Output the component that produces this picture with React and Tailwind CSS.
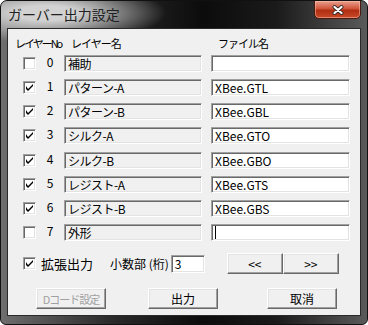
import React from "react"

const sunken =
  "border border-t-[#a0a0a0] border-l-[#a0a0a0] border-r-white border-b-white shadow-[inset_1px_1px_0_#696969,inset_-1px_-1px_0_#e3e3e3]"
const raised =
  "border border-t-white border-l-white border-r-[#696969] border-b-[#696969] shadow-[inset_-1px_-1px_0_#a0a0a0,inset_1px_1px_0_#e3e3e3] bg-[#f0f0f0]"

const layers = [
  { no: 0, name: "補助", file: "", on: false },
  { no: 1, name: "パターン-A", file: "XBee.GTL", on: true },
  { no: 2, name: "パターン-B", file: "XBee.GBL", on: true },
  { no: 3, name: "シルク-A", file: "XBee.GTO", on: true },
  { no: 4, name: "シルク-B", file: "XBee.GBO", on: true },
  { no: 5, name: "レジスト-A", file: "XBee.GTS", on: true },
  { no: 6, name: "レジスト-B", file: "XBee.GBS", on: true },
  { no: 7, name: "外形", file: "", on: false, caret: true },
]

function Check({ on }) {
  return (
    <div className={`w-[13px] h-[13px] bg-white ${sunken} flex items-center justify-center`}>
      {on && (
        <svg width="7" height="7" viewBox="0 0 7 7">
          <path d="M0 2v3l2 2 5-5V0L2 5z" fill="#000" />
        </svg>
      )}
    </div>
  )
}

function Btn({ children, w, disabled }) {
  return (
    <div
      className={`${raised} h-[21px] ${w} flex items-center justify-center whitespace-nowrap ${disabled ? "text-[#a0a0a0]" : "text-black"}`}
    >
      {children}
    </div>
  )
}

export default function App() {
  return (
    <div
      className="w-[368px] h-[325px] flex flex-col rounded-t-[7px] rounded-b-[6px] border border-[#111] overflow-hidden bg-[radial-gradient(ellipse_120px_30px_at_45px_12px,#d2d2d2_25%,rgba(200,200,200,0)_100%),linear-gradient(90deg,#6e6e6e_0%,#2a2a2a_30%,#0c0c0c_55%,#1a1a1a_75%,#5a5a5a_100%)] text-[12px] leading-[14px] text-black"
      style={{ fontFamily: '"Noto Sans CJK JP", "Noto Sans", sans-serif' }}
    >
      <div className="h-[27px] flex items-start relative">
        <div className="pl-[7px] pt-[5px] text-[14px] leading-[16px] text-[#222]">ガーバー出力設定</div>
        <div className="absolute right-[6px] top-[-1px] w-[47px] h-[19px] rounded-b-[5px] border border-[#4a1a10] bg-[linear-gradient(180deg,#e9a090_0%,#d0553a_45%,#b02e12_55%,#c84a2a_100%)] shadow-[inset_0_0_0_1px_rgba(255,200,180,0.5)] flex items-center justify-center">
          <svg width="12" height="10" viewBox="0 0 12 10">
            <path d="M2.5 2l7 6M9.5 2l-7 6" stroke="#3a2a2a" strokeWidth="4" strokeLinecap="round" />
            <path d="M2.5 2l7 6M9.5 2l-7 6" stroke="#fff" strokeWidth="2.2" strokeLinecap="round" />
          </svg>
        </div>
      </div>
      <div className="mx-[6px] h-[288px] border border-[#2a2a2a] bg-[#f0f0f0] relative">
        <div className="h-[26px] flex items-center pt-[1px] text-[11px] tracking-[-1px] whitespace-nowrap">
          <span className="ml-[7px] w-[56px] tracking-[-2px]">レイヤーNo</span>
          <span className="w-[147px]">レイヤー名</span>
          <span>ファイル名</span>
        </div>
        <div className="flex flex-col">
          {layers.map((l, i) => (
            <div key={l.no} className={`flex items-start ${i === 3 ? "h-[25px]" : "h-[24px]"}`}>
              <div className="ml-[15px] mt-[2px]">
                <Check on={l.on} />
              </div>
              <div className="w-[28px] text-center">{l.no}</div>
              <div className={`w-[138px] h-[17px] bg-[#f0f0f0] ${sunken} pl-[3px] flex items-center tracking-[-0.5px]`}>{l.name}</div>
              <div className={`ml-[9px] w-[139px] h-[17px] bg-white ${sunken} pl-[3px] flex items-center`}>
                {l.file}
                {l.caret && <div className="w-[1px] h-[13px] bg-black" />}
              </div>
            </div>
          ))}
        </div>
        <div className="flex items-center mt-[5px] h-[21px]">
          <div className="ml-[15px]">
            <Check on />
          </div>
          <span className="ml-[5px] text-[13px]">拡張出力</span>
          <span className="ml-[17px]">小数部 (桁)</span>
          <div className={`ml-[2px] w-[34px] h-[18px] bg-white ${sunken} pl-[3px] flex items-center`}>3</div>
          <div className="ml-[22px] flex">
            <Btn w="w-[56px]">&lt;&lt;</Btn>
            <Btn w="w-[56px]">&gt;&gt;</Btn>
          </div>
        </div>
        <div className="flex mt-[14px]">
          <div className="ml-[28px]">
            <Btn w="w-[70px]" disabled>
              <span className="text-[11px] tracking-[-1px]">Dコード設定</span>
            </Btn>
          </div>
          <div className="ml-[42px]">
            <Btn w="w-[70px]">出力</Btn>
          </div>
          <div className="ml-[49px]">
            <Btn w="w-[70px]">取消</Btn>
          </div>
        </div>
      </div>
    </div>
  )
}
